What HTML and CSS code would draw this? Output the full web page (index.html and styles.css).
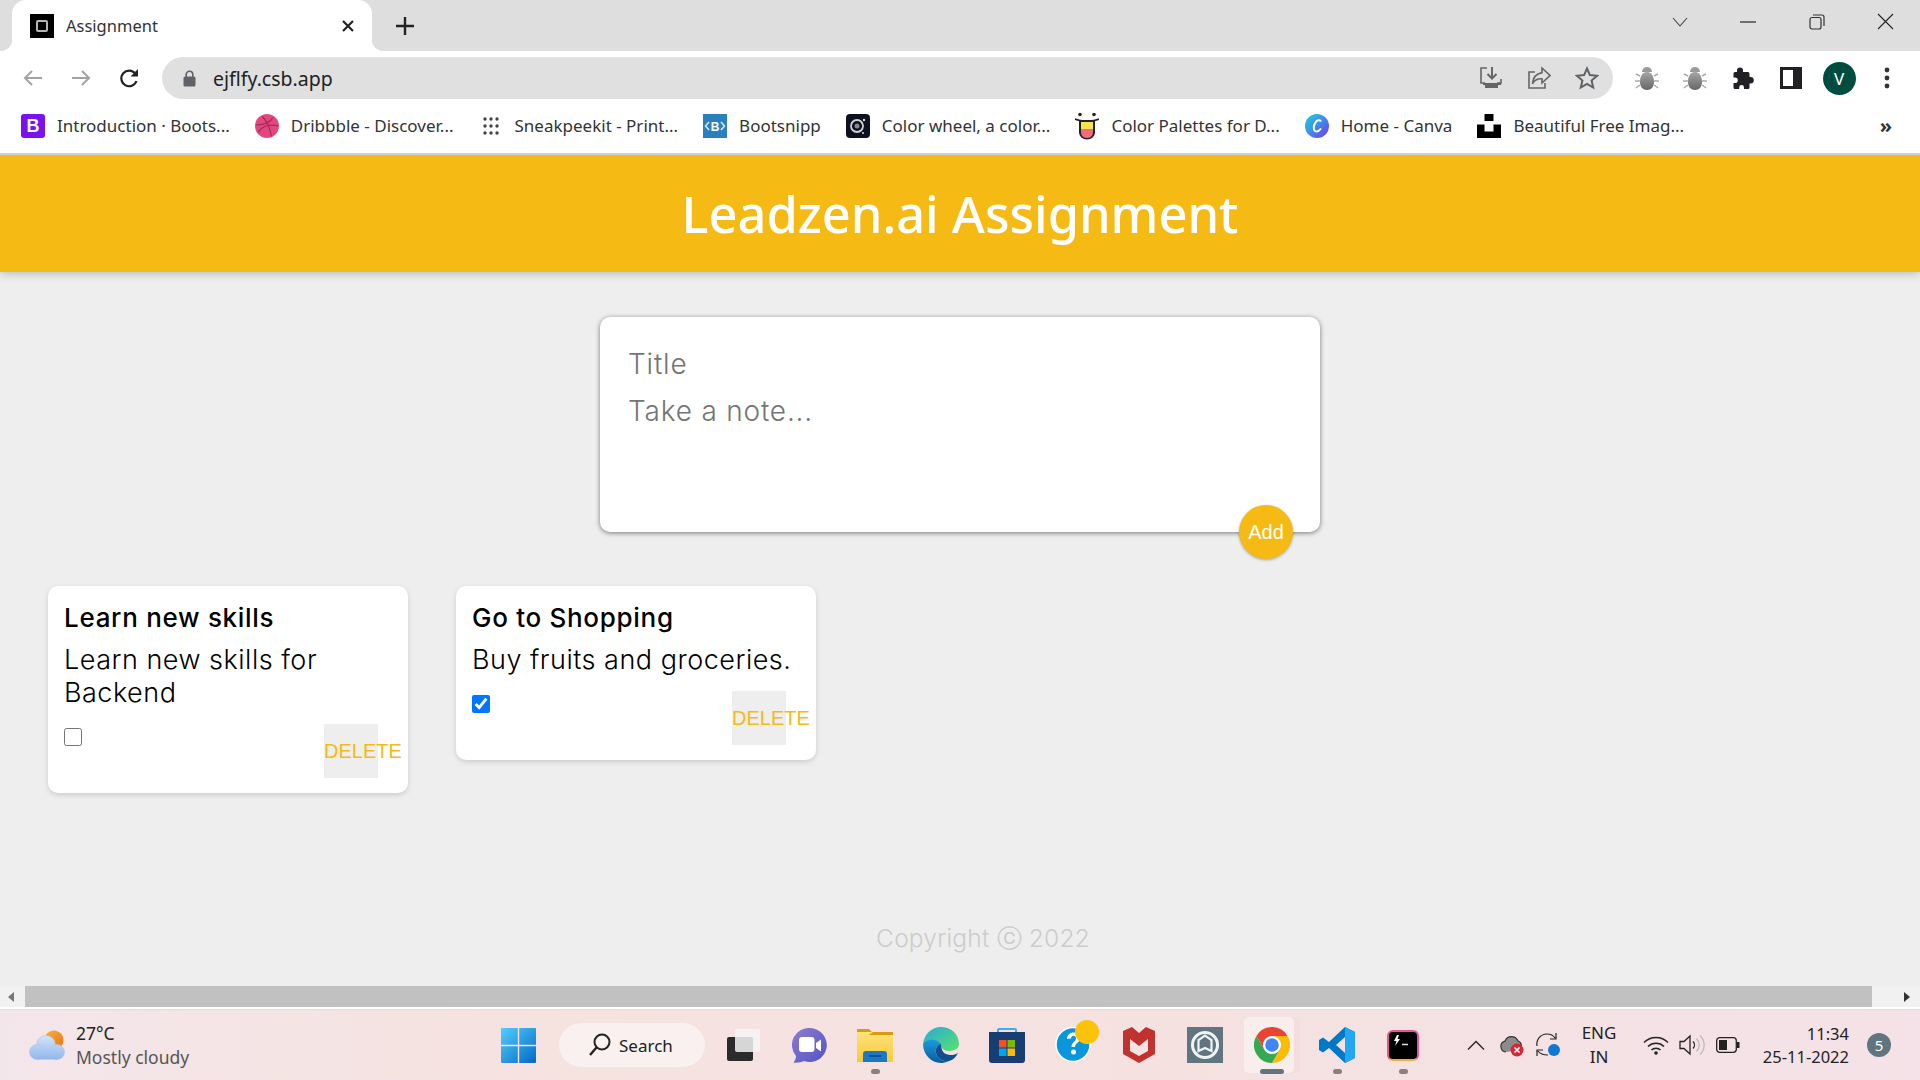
FILE: index.html
```html
<!DOCTYPE html>
<html>
<head>
	<title>Assignment</title>
	<link rel="stylesheet" href="styles.css">
</head>
<body>
<div class="window">

	<div class="tabstrip">
		<div class="tab">
			<span class="favicon"><span class="favicon-box"></span></span>
			<span class="tab-title">Assignment</span>
			<svg class="tab-close" width="14" height="14" viewBox="0 0 14 14"><path d="M2 2l10 10M12 2L2 12" stroke="#222" stroke-width="2.2"/></svg>
		</div>
		<svg class="new-tab" width="20" height="20" viewBox="0 0 20 20"><path d="M10 1v18M1 10h18" stroke="#222" stroke-width="2.4"/></svg>
		<div class="win-controls">
			<span class="win-btn"><svg width="18" height="12" viewBox="0 0 18 12"><path d="M2 2l7 8 7-8" fill="none" stroke="#444" stroke-width="1.1"/></svg></span>
			<span class="win-btn"><svg width="16" height="4" viewBox="0 0 16 4"><path d="M0 2h16" stroke="#222" stroke-width="1.2"/></svg></span>
			<span class="win-btn"><svg width="16" height="16" viewBox="0 0 16 16"><rect x="1" y="3.5" width="11" height="11.5" rx="2" fill="none" stroke="#333" stroke-width="1.2"/><path d="M4 1h9a2 2 0 0 1 2 2v9" fill="none" stroke="#333" stroke-width="1.2"/></svg></span>
			<span class="win-btn"><svg width="17" height="17" viewBox="0 0 17 17"><path d="M1 1l15 15M16 1L1 16" stroke="#222" stroke-width="1.1"/></svg></span>
		</div>
	</div>

	<div class="toolbar">
		<span class="tool-btn"><svg width="20" height="18" viewBox="0 0 20 18"><path d="M19 9H2M9 2L2 9l7 7" fill="none" stroke="#a3a3a3" stroke-width="2"/></svg></span>
		<span class="tool-btn"><svg width="20" height="18" viewBox="0 0 20 18"><path d="M1 9h17M11 2l7 7-7 7" fill="none" stroke="#a3a3a3" stroke-width="2"/></svg></span>
		<span class="tool-btn"><svg width="21" height="21" viewBox="0 0 21 21"><path d="M17.5 13a7.8 7.8 0 1 1-1.2-7.4" fill="none" stroke="#222" stroke-width="2.2"/><path d="M19 1v7.5h-7.5z" fill="#222"/></svg></span>
		<div class="omnibox">
			<svg class="lock" width="13" height="17" viewBox="0 0 13 17"><path d="M3.2 7V4.6a3.3 3.3 0 0 1 6.6 0V7" fill="none" stroke="#5f6368" stroke-width="1.6"/><rect x="0.5" y="6.5" width="12" height="10" rx="1.5" fill="#5f6368"/></svg>
			<span class="url">ejflfy.csb.app</span>
			<span class="omni-icons">
				<span class="tool-btn"><svg width="24" height="24" viewBox="0 0 24 24"><path d="M8 2H2v15h4M22 13v4h-4" fill="none" stroke="#666" stroke-width="1.6"/><path d="M13 1v11M8.500 8l4.500 4.500L17.500 8" fill="none" stroke="#666" stroke-width="2"/><path d="M4 17h18v2H4z" fill="#666"/><path d="M6 19h13v3H6z" fill="#666"/></svg></span>
				<span class="tool-btn"><svg width="24" height="24" viewBox="0 0 24 24"><path d="M8 6H2v16h16v-5" fill="none" stroke="#666" stroke-width="1.6"/><path d="M15 2l8 7.5-8 7.5v-4.2c-4.5-.3-7.5 1.2-9.5 5 .3-6 3.5-10 9.5-11.2z" fill="none" stroke="#666" stroke-width="1.6"/></svg></span>
				<span class="tool-btn"><svg width="24" height="24" viewBox="0 0 24 24"><path d="M12 2.5l2.9 6.6 7.1.7-5.4 4.7 1.6 7-6.2-3.7-6.2 3.7 1.6-7L2 9.8l7.1-.7z" fill="none" stroke="#5f6368" stroke-width="2"/></svg></span>
			</span>
		</div>
		<span class="tool-btn first-ext"><svg width="24" height="26" viewBox="0 0 24 26"><use href="#bug"/></svg></span>
		<span class="tool-btn"><svg width="24" height="26" viewBox="0 0 24 26"><use href="#bug"/></svg></span>
		<span class="tool-btn"><svg width="24" height="24" viewBox="0 0 24 24"><path d="M9 1.5a3 3 0 0 1 3 3V6h5a1.5 1.5 0 0 1 1.5 1.5V11h1a3.2 3.2 0 0 1 0 6.5h-1v4a1.5 1.5 0 0 1-1.5 1.500h-4v-1.500a2.400 2.400 0 0 0-4.800 0V23H4a1.500 1.500 0 0 1-1.500-1.500V17H4a2.800 2.800 0 0 0 0-5.600H2.500V7.500A1.500 1.500 0 0 1 4 6h2V4.500a3 3 0 0 1 3-3z" fill="#202124"/></svg></span>
		<span class="tool-btn"><svg width="22" height="22" viewBox="0 0 22 22"><rect x="0" y="0" width="22" height="22" fill="#202124"/><rect x="3" y="3" width="10" height="16" fill="#fff"/></svg></span>
		<span class="tool-btn"><span class="avatar">V</span></span>
		<span class="tool-btn"><svg width="6" height="22" viewBox="0 0 6 22"><circle cx="3" cy="3" r="2.400" fill="#333"/><circle cx="3" cy="11" r="2.400" fill="#333"/><circle cx="3" cy="19" r="2.400" fill="#333"/></svg></span>
	</div>

	<div class="bookmarks">
		<span class="bm"><svg width="24" height="24" viewBox="0 0 24 24"><rect width="24" height="24" rx="3" fill="#7a12ee"/><text x="12" y="18" text-anchor="middle" class="bm-letter">B</text></svg>Introduction · Boots...</span>
		<span class="bm"><svg width="24" height="24" viewBox="0 0 24 24"><circle cx="12" cy="12" r="12" fill="#e2487f"/><path d="M7.500 2.500c4 4.500 7.500 11.500 9 20M1 11c6.500 0 12.500-1.500 17-7M3 18.500c3-5.500 10-9 20-6.500" fill="none" stroke="#a82a5a" stroke-width="1.200"/></svg>Dribbble - Discover...</span>
		<span class="bm"><svg width="24" height="18" viewBox="-4 0 24 18"><g fill="#444"><circle cx="2" cy="2" r="1.700"/><circle cx="8" cy="2" r="1.700"/><circle cx="14" cy="2" r="1.700"/><circle cx="2" cy="9" r="1.700"/><circle cx="8" cy="9" r="1.700"/><circle cx="14" cy="9" r="1.700"/><circle cx="2" cy="16" r="1.700"/><circle cx="8" cy="16" r="1.700"/><circle cx="14" cy="16" r="1.700"/></g></svg>Sneakpeekit - Print...</span>
		<span class="bm"><svg width="24" height="24" viewBox="0 0 24 24"><rect width="24" height="24" fill="#2a7fbe"/><text x="12" y="17" text-anchor="middle" class="bm-snip">B</text><path d="M6 8l-3.500 4L6 16M18 8l3.500 4L18 16" fill="none" stroke="#d5e8f5" stroke-width="1.600"/></svg>Bootsnipp</span>
		<span class="bm"><svg width="24" height="24" viewBox="0 0 24 24"><rect width="24" height="24" rx="4" fill="#0d1021"/><circle cx="11" cy="12" r="6" fill="none" stroke="#cfd2d6" stroke-width="1.800"/><circle cx="11" cy="12" r="2.500" fill="#888"/><circle cx="18" cy="6" r="1.200" fill="#ddd"/><circle cx="17" cy="19" r="1" fill="#ddd"/></svg>Color wheel, a color...</span>
		<span class="bm"><svg width="24" height="28" viewBox="0 0 24 28"><circle cx="5" cy="2.500" r="1.800" fill="#222"/><circle cx="19" cy="2.500" r="1.800" fill="#222"/><path d="M0 7c3 1.500 5 2 12 2s9-.5 12-2" fill="none" stroke="#222" stroke-width="1.800"/><path d="M4 8.500h16v12a8 7 0 0 1-16 0z" fill="#222"/><path d="M6 10h12v7H6z" fill="#fce34e"/><path d="M6 17h12v3.500a6 5.500 0 0 1-12 0z" fill="#f46a7a"/></svg>Color Palettes for D...</span>
		<span class="bm"><svg width="24" height="24" viewBox="0 0 24 24"><defs><linearGradient id="canva" x1="0" y1="0" x2="1" y2="1"><stop offset="0" stop-color="#1fd2d8"/><stop offset="0.500" stop-color="#3f8ce8"/><stop offset="1" stop-color="#7b2ff0"/></linearGradient></defs><circle cx="12" cy="12" r="12" fill="url(#canva)"/><path d="M16 7.500c-1-2-4-1.500-5.500 1-2 3-2.500 7-.5 8.500 2 1.300 4.500-.5 6-2.500" fill="none" stroke="#fff" stroke-width="2"/></svg>Home - Canva</span>
		<span class="bm"><svg width="24" height="24" viewBox="0 0 24 24"><path d="M7.500 0h9v7h-9zM0 10.500h7.500v7h9v-7H24V24H0z" fill="#000"/></svg>Beautiful Free Imag...</span>
		<span class="bm-more">»</span>
	</div>

	<main class="page">
		<header class="site-header"><h1>Leadzen.ai Assignment</h1></header>

		<form class="create-note">
			<input class="note-title" type="text" placeholder="Title">
			<textarea class="note-body" placeholder="Take a note..."></textarea>
			<button class="add-btn" type="button">Add</button>
		</form>

		<div class="notes">
			<div class="note">
				<h2>Learn new skills</h2>
				<p>Learn new skills for Backend</p>
				<div class="note-actions">
					<input type="checkbox">
					<button class="delete-btn" type="button">DELETE</button>
				</div>
			</div>
			<div class="note">
				<h2>Go to Shopping</h2>
				<p>Buy fruits and groceries.</p>
				<div class="note-actions">
					<input type="checkbox" checked>
					<button class="delete-btn" type="button">DELETE</button>
				</div>
			</div>
		</div>

		<footer class="site-footer">Copyright ⓒ 2022</footer>
	</main>

	<div class="hscroll">
		<span class="arrow-left"></span>
		<span class="hscroll-thumb"></span>
		<span class="arrow-right"></span>
	</div>

	<div class="taskbar">
		<div class="tb-left">
			<svg width="37" height="31" viewBox="0 0 37 31"><defs><linearGradient id="cloud" gradientUnits="userSpaceOnUse" x1="0" y1="6" x2="0" y2="30"><stop offset="0" stop-color="#d3e3fa"/><stop offset="1" stop-color="#90b6ea"/></linearGradient><linearGradient id="sun" x1="0" y1="0" x2="1" y2="1"><stop offset="0" stop-color="#fbb13c"/><stop offset="1" stop-color="#e9720f"/></linearGradient></defs><circle cx="25" cy="10" r="9.500" fill="url(#sun)"/><g fill="url(#cloud)" stroke="#a6c4ee" stroke-width="0.600"><circle cx="17" cy="15" r="9.500"/><circle cx="8" cy="22" r="7.500"/><circle cx="28" cy="22" r="7.500"/><rect x="8" y="18" width="20" height="11.500" stroke="none"/></g></svg>
			<div class="weather">
				<div class="temp">27°C</div>
				<div class="sky">Mostly cloudy</div>
			</div>
		</div>
		<span class="tb-item"><svg width="35" height="35" viewBox="0 0 35 35"><defs><linearGradient id="win" x1="0" y1="0" x2="1" y2="1"><stop offset="0" stop-color="#52cffc"/><stop offset="1" stop-color="#0269c8"/></linearGradient></defs><path d="M0 1a1 1 0 0 1 1-1h15.800v16.800H0zM18.200 0H34a1 1 0 0 1 1 1v15.800H18.200zM0 18.200h16.800V35H1a1 1 0 0 1-1-1zM18.200 18.200H35V34a1 1 0 0 1-1 1H18.200z" fill="url(#win)"/></svg></span>
		<div class="tb-search">
			<svg width="24" height="26" viewBox="0 0 24 26"><circle cx="14" cy="10" r="7.500" fill="none" stroke="#222" stroke-width="2"/><path d="M8.500 15.500L2 23" stroke="#222" stroke-width="2.400"/></svg>
			<span>Search</span>
		</div>
		<span class="tb-item tb-taskview"><svg width="34" height="34" viewBox="0 0 34 34"><rect x="1" y="9" width="26" height="24" rx="2" fill="#2b2b2b"/><rect x="9" y="1" width="25" height="23" rx="2" fill="#f5f5f5" opacity="0.85"/></svg></span>
		<div class="tb-apps">
			<span class="tb-item"><svg width="35" height="35" viewBox="0 0 35 35"><defs><linearGradient id="chat" x1="0" y1="0" x2="1" y2="1"><stop offset="0" stop-color="#8f7bcf"/><stop offset="1" stop-color="#4f55c5"/></linearGradient></defs><path d="M18 0a17 17 0 1 1-6 33c-3 1.500-7 2-10.500 1.500 1.500-2 2.500-4 2.500-6.500A17 17 0 0 1 18 0z" fill="url(#chat)"/><rect x="7" y="9" width="15.500" height="15" rx="3" fill="#fff"/><path d="M24 15l5-3.500v12L24 20z" fill="#fff"/></svg></span>
			<span class="tb-item running"><svg width="36" height="33" viewBox="0 0 36 33"><defs><linearGradient id="folder" x1="0" y1="0" x2="0" y2="1"><stop offset="0" stop-color="#fde27a"/><stop offset="1" stop-color="#fbc938"/></linearGradient></defs><path d="M0 1a1 1 0 0 1 1-1h11l3 3h21v4H0z" fill="#d99c0c"/><path d="M0 3h16l-4 3h24v27H0z" fill="url(#folder)"/><path d="M6 33V25a3 3 0 0 1 3-3h18a3 3 0 0 1 3 3v8z" fill="#1a78c4"/><path d="M12 27h12" stroke="#0d4c86" stroke-width="1.600"/></svg></span>
			<span class="tb-item"><svg width="36" height="36" viewBox="0 0 36 36"><defs><linearGradient id="edge1" x1="0" y1="0" x2="1" y2="1"><stop offset="0" stop-color="#27a9d9"/><stop offset="1" stop-color="#5be26b"/></linearGradient><linearGradient id="edge2" x1="0" y1="0" x2="0" y2="1"><stop offset="0" stop-color="#1a9bdc"/><stop offset="1" stop-color="#0c5a9f"/></linearGradient></defs><path d="M0 17C1 7 9 0 18 0c10 0 18 7 18 17 0 5-5 7-10 7-3 0-6-1-7-3-5-7-14-9-19-4z" fill="url(#edge1)"/><path d="M0 17c4-6 14-5 18 0-4 1-6 5-5 9 1 5 6 9 13 8-3 1.500-6 2-8 2C8 36 0 27 0 17z" fill="url(#edge2)"/><path d="M18 17c-4 1-6 5-5 9 1 5 6 9 13 8 4-1 7-4 9-8-3 2-8 3-12 1-3-1-5-5-5-10z" fill="#0e4f8f"/></svg></span>
			<span class="tb-item"><svg width="36" height="35" viewBox="0 0 36 35"><path d="M9 6V2a1 1 0 0 1 1-1h16a1 1 0 0 1 1 1v4" fill="none" stroke="#3bb0e8" stroke-width="2"/><path d="M0 4h36v28a3 3 0 0 1-3 3H3a3 3 0 0 1-3-3z" fill="#173d72"/><rect x="10" y="12" width="7.500" height="7.500" fill="#f25022"/><rect x="18.500" y="12" width="7.500" height="7.500" fill="#7fba00"/><rect x="10" y="20.500" width="7.500" height="7.500" fill="#00a4ef"/><rect x="18.500" y="20.500" width="7.500" height="7.500" fill="#ffb900"/></svg></span>
			<span class="tb-item"><svg width="56" height="50" viewBox="0 0 56 50"><circle cx="28" cy="24.500" r="17" fill="#0b95da" stroke="#fff" stroke-width="1.500"/><path d="M22 19c0-4 3-6.500 6.500-6.500s6.500 2.500 6.500 6c0 4-5 4.500-5 8.500h-3.500c0-5 4.500-5.500 4.500-8.500 0-1.500-1-2.700-2.500-2.700s-2.500 1.200-2.500 2.700z" fill="#fff"/><circle cx="28.500" cy="32" r="2.500" fill="#fff"/><ellipse cx="42" cy="12" rx="12" ry="12" fill="#fcc30b"/></svg></span>
			<span class="tb-item"><svg width="32" height="36" viewBox="0 0 32 36"><path d="M0 4l9-4 7 6 7-6 9 4v23l-16 9-16-9z" fill="#c0322f"/><path d="M7 12l9 7 9-7v12l-9 5-9-5z" fill="#f5e2e1"/></svg></span>
			<span class="tb-item"><svg width="36" height="36" viewBox="0 0 36 36"><rect width="36" height="36" fill="#607580"/><circle cx="18" cy="18" r="12.500" fill="none" stroke="#f1f3f4" stroke-width="3"/><path d="M11.500 24V13L18 8.500l6.500 4.500v11l-6.500-3z" fill="none" stroke="#f1f3f4" stroke-width="2.200"/></svg></span>
			<span class="tb-item tb-active">
				<svg width="36" height="36" viewBox="0 0 36 36"><path d="M2.400 9A18 18 0 0 1 33.600 9H18a9 9 0 0 0-7.800 13.500z" fill="#ea4335"/><path d="M33.600 9A18 18 0 0 1 18 36l7.800-13.500A9 9 0 0 0 18 9z" fill="#fbbc05"/><path d="M18 36A18 18 0 0 1 2.400 9l7.800 13.500a9 9 0 0 0 15.600 0z" fill="#34a853"/><circle cx="18" cy="18" r="8.500" fill="#fff"/><circle cx="18" cy="18" r="6.800" fill="#4285f4"/></svg>
			</span>
			<span class="tb-item running"><svg width="36" height="36" viewBox="0 0 36 36"><path fill-rule="evenodd" d="M26 0l10 5v26l-10 5-16-15-6 4.500L0 23V13l4-2.500L10 15zM26 10l-9 8 9 8z" fill="#0078c8"/><path d="M26 0l10 5v26l-10 5z" fill="#22a7f2"/></svg></span>
			<span class="tb-item running"><span class="term"><svg width="16" height="14" viewBox="0 0 16 14"><path d="M4 0L1 6h2.500L2 11l5-7H4.500L6 0z" fill="#fff"/><path d="M9 9.500h6" stroke="#ddd" stroke-width="1.500"/></svg></span></span>
		</div>
		<div class="tray">
			<span class="tray-item"><svg width="18" height="10" viewBox="0 0 18 10"><path d="M1 9.500L9 1.500l8 8" fill="none" stroke="#222" stroke-width="1.300"/></svg></span>
			<span class="tray-item"><svg width="26" height="24" viewBox="0 0 26 24"><path d="M7 19a5.500 5.500 0 0 1-1-10.800A7 7 0 0 1 19 8a5 5 0 0 1 1 9" fill="#8c8c8c" stroke="#333" stroke-width="1.200"/><circle cx="18" cy="17" r="6.500" fill="#d92632"/><path d="M15.500 14.500l5 5M20.500 14.500l-5 5" stroke="#fff" stroke-width="1.600"/></svg></span>
			<span class="tray-item"><svg width="26" height="26" viewBox="0 0 26 26"><path d="M2 14C1 7 6 2 12 2c3 0 6 1 8 4M21 1v6h-6" fill="none" stroke="#222" stroke-width="1.200"/><path d="M13 23c-4 0-8-1-10-4M2 24v-6h6" fill="none" stroke="#222" stroke-width="1.200"/><circle cx="19" cy="18" r="6" fill="#0f78d4"/></svg></span>
			<div class="tray-lang">ENG<br>IN</div>
			<span class="tray-item tray-wifi"><svg width="26" height="20" viewBox="0 0 26 20"><path d="M1 7.500a17 17 0 0 1 24 0M5 11.500a11.500 11.500 0 0 1 16 0M8.500 15a6.500 6.500 0 0 1 9 0" fill="none" stroke="#222" stroke-width="1.500"/><circle cx="13" cy="18" r="1.800" fill="#222"/></svg></span>
			<span class="tray-item"><svg width="26" height="22" viewBox="0 0 26 22"><path d="M1 7.500h4l6-5.500v18l-6-5.500H1z" fill="none" stroke="#222" stroke-width="1.300"/><path d="M14 7.500a5 5 0 0 1 0 7" fill="none" stroke="#222" stroke-width="1.300"/><path d="M17.500 4.500a9 9 0 0 1 0 13M21 1.500a13 13 0 0 1 0 19" fill="none" stroke="#bbb" stroke-width="1.300"/></svg></span>
			<span class="tray-item"><svg width="24" height="16" viewBox="0 0 24 16"><rect x="0.700" y="0.700" width="19.600" height="14.600" rx="3" fill="none" stroke="#222" stroke-width="1.300"/><rect x="3" y="3" width="8" height="10" fill="#222"/><rect x="21" y="5" width="2.500" height="6" fill="#222"/></svg></span>
			<div class="clock">11:34<br>25-11-2022</div>
			<span class="notif">5</span>
		</div>
	</div>

</div>

<svg class="defs" width="0" height="0">
	<defs>
		<linearGradient id="bug-fill" x1="0" y1="0" x2="0" y2="1"><stop offset="0" stop-color="#a6a6a6"/><stop offset="1" stop-color="#666"/></linearGradient>
		<g id="bug">
			<path d="M7 7a5 5 0 0 1 10 0z" fill="#9a9a9a"/>
			<path d="M12 7c5 0 7 5 7 10s-3 8-7 8-7-3-7-8 2-10 7-10z" fill="url(#bug-fill)"/>
			<path d="M5 11L1 9M5 16H0M5 20l-4 3M19 11l4-2M19 16h5M19 20l4 3" stroke="#aaa" stroke-width="1.400"/>
		</g>
	</defs>
</svg>
</body>
</html>
```

FILE: styles.css
```css
* {
	box-sizing: border-box;
}
html, body {
	margin: 0;
	padding: 0;
	height: 100%;
	overflow: hidden;
}
body {
	font-family: 'Noto Sans', sans-serif;
	color: #222;
	background-color: #fff;
}
.window {
	display: flex;
	flex-direction: column;
	height: 1080px;
}
.defs {
	display: block;
	height: 0;
}

/* tab strip */
.tabstrip {
	display: flex;
	align-items: center;
	flex-shrink: 0;
	height: 51px;
	padding-left: 12px;
	background-color: #dedede;
}
.tab {
	position: relative;
	display: flex;
	align-items: center;
	width: 360px;
	height: 51px;
	padding: 0 17px 0 18px;
	background-color: #fff;
	border-radius: 14px 14px 0 0;
}
.tab::before, .tab::after {
	content: "";
	position: absolute;
	bottom: 0;
	width: 12px;
	height: 12px;
}
.tab::before {
	left: -12px;
	background: radial-gradient(circle at 0 0, #dedede 12px, #fff 12.500px);
}
.tab::after {
	right: -12px;
	background: radial-gradient(circle at 100% 0, #dedede 12px, #fff 12.500px);
}
.favicon {
	display: flex;
	align-items: center;
	justify-content: center;
	width: 24px;
	height: 24px;
	background-color: #000;
}
.favicon-box {
	width: 12px;
	height: 12px;
	border: 2px solid #b5b5b5;
	border-radius: 2px;
}
.tab-title {
	margin-left: 12px;
	font-size: 16.500px;
	color: #333;
}
.tab-close {
	margin-left: auto;
}
.new-tab {
	margin-left: 23px;
}
.win-controls {
	display: flex;
	margin-left: auto;
	margin-top: -8px;
}
.win-btn {
	display: flex;
	align-items: center;
	justify-content: center;
	width: 68.700px;
	height: 36px;
}

/* toolbar */
.toolbar {
	display: flex;
	align-items: center;
	flex-shrink: 0;
	height: 54px;
	padding-left: 9px;
	background-color: #fff;
}
.tool-btn {
	display: flex;
	align-items: center;
	justify-content: center;
	width: 48px;
	height: 42px;
	flex-shrink: 0;
}
.omnibox {
	display: flex;
	align-items: center;
	width: 1451px;
	height: 42px;
	margin-left: 9px;
	padding-left: 21px;
	background-color: #e0e0e0;
	border-radius: 21px;
}
.lock {
	flex-shrink: 0;
}
.url {
	margin-left: 17px;
	font-size: 19.500px;
	color: #222;
}
.omni-icons {
	display: flex;
	margin-left: auto;
	margin-right: 2px;
}
.first-ext {
	margin-left: 10px;
}
.avatar {
	display: flex;
	align-items: center;
	justify-content: center;
	width: 33px;
	height: 33px;
	color: #fff;
	font-size: 17px;
	background-color: #004d40;
	border-radius: 50%;
}

/* bookmarks bar */
.bookmarks {
	display: flex;
	align-items: center;
	flex-shrink: 0;
	gap: 25px;
	height: 50px;
	padding: 0 0 7px 21px;
	background-color: #fff;
	border-bottom: 2px solid #d0d0d0;
	font-size: 17px;
	color: #333;
}
.bm {
	display: flex;
	align-items: center;
	gap: 12px;
	white-space: nowrap;
}
.bm-letter {
	font-family: 'Liberation Sans', sans-serif;
	font-size: 18px;
	font-weight: bold;
	fill: #fff;
}
.bm-snip {
	font-family: 'Liberation Sans', sans-serif;
	font-size: 12px;
	font-weight: bold;
	fill: #fff;
}
.bm-more {
	margin-left: auto;
	margin-right: 28px;
	font-size: 20px;
	font-weight: bold;
}

/* page */
.page {
	display: flex;
	flex-direction: column;
	flex: 1;
	min-height: 0;
	background-color: #eee;
	font-family: 'Inter', sans-serif;
	overflow: hidden;
}
.site-header {
	display: flex;
	align-items: center;
	justify-content: center;
	flex-shrink: 0;
	height: 117px;
	background-color: #f5ba13;
	box-shadow: 0 0 10px rgba(0, 0, 0, 0.3);
}
.site-header h1 {
	margin: 0;
	font-family: 'Noto Sans', sans-serif;
	font-size: 50.500px;
	font-weight: 500;
	color: #fff;
}
.create-note {
	position: relative;
	display: flex;
	flex-direction: column;
	flex-shrink: 0;
	width: 720px;
	height: 215px;
	margin: 45px auto 54px;
	padding: 24px 28px;
	background-color: #fff;
	border-radius: 10px;
	box-shadow: 0 1px 5px rgba(0, 0, 0, 0.5);
}
.note-title, .note-body {
	width: 100%;
	padding: 0;
	border: none;
	outline: none;
	resize: none;
	background: none;
	font-family: 'Inter', sans-serif;
	font-size: 28px;
	font-weight: 300;
	letter-spacing: 0.8px;
	line-height: 47px;
}
.note-title::placeholder, .note-body::placeholder {
	color: #757575;
}
.note-body {
	height: 100px;
}
.add-btn {
	position: absolute;
	right: 27px;
	bottom: -27px;
	width: 54px;
	height: 54px;
	padding: 0;
	border: none;
	border-radius: 50%;
	background-color: #f5ba13;
	color: #fff;
	font-family: 'Liberation Sans', sans-serif;
	font-size: 20px;
	box-shadow: 0 1px 3px rgba(0, 0, 0, 0.3);
}
.notes {
	display: flex;
	align-items: flex-start;
	flex-shrink: 0;
	gap: 48px;
	padding-left: 48px;
}
.note {
	width: 360px;
	padding: 15px 16px 15px;
	background-color: #fff;
	border-radius: 10px;
	box-shadow: 0 2px 5px #ccc;
}
.note h2 {
	margin: 0 0 8px;
	font-size: 26px;
	font-weight: 500;
	letter-spacing: 0.7px;
	line-height: 34px;
	color: #000;
}
.note p {
	margin: 0 0 15px;
	font-size: 27px;
	font-weight: 300;
	letter-spacing: 0.5px;
	line-height: 33px;
	color: #000;
}
.note-actions {
	display: flex;
	align-items: flex-start;
	justify-content: space-between;
	padding-right: 14px;
}
.note-actions input {
	width: 18px;
	height: 18px;
	margin: 4px 0 0;
}
.delete-btn {
	display: flex;
	align-items: center;
	width: 54px;
	height: 54px;
	padding: 0;
	border: none;
	background-color: #eee;
	color: #f5ba13;
	font-family: 'Liberation Sans', sans-serif;
	font-size: 20px;
	white-space: nowrap;
}
.site-footer {
	margin-top: auto;
	padding: 0 0 31px 46px;
	text-align: center;
	font-size: 24.500px;
	font-weight: 300;
	letter-spacing: 0.2px;
	color: #ccc;
}

/* scrollbar */
.hscroll {
	display: flex;
	align-items: center;
	flex-shrink: 0;
	height: 21px;
	margin-bottom: 2px;
	background-color: #f1f1f1;
}
.arrow-left {
	width: 0;
	height: 0;
	margin-left: 8px;
	border: 5px solid transparent;
	border-left: none;
	border-right: 6px solid #777;
}
.hscroll-thumb {
	width: 1847px;
	height: 21px;
	margin-left: 11px;
	background-color: #c1c1c1;
}
.arrow-right {
	width: 0;
	height: 0;
	margin-left: 32px;
	border: 5px solid transparent;
	border-right: none;
	border-left: 6px solid #333;
}

/* taskbar */
.taskbar {
	display: flex;
	align-items: center;
	flex-shrink: 0;
	height: 71px;
	background: linear-gradient(90deg, #f3e6ea 0%, #f6e2df 30%, #f5e1e0 60%, #f4e2e8 100%);
	border-top: 1px solid #e8d8d8;
}
.tb-left {
	display: flex;
	align-items: center;
	width: 485px;
	padding-left: 29px;
}
.weather {
	margin-left: 10px;
	font-size: 17.500px;
	line-height: 24px;
}
.sky {
	color: #555;
}
.tb-item {
	position: relative;
	display: flex;
	align-items: center;
	justify-content: center;
	width: 66px;
	height: 56px;
	flex-shrink: 0;
}
.running::after, .tb-active::after {
	content: "";
	position: absolute;
	left: 29px;
	bottom: -1px;
	width: 9px;
	height: 5px;
	border-radius: 3px;
	background-color: #8a7f7f;
}
.tb-active {
	justify-content: flex-start;
	width: 50px;
	margin: 0 10px 0 6px;
	padding-left: 10px;
	background-color: #f8eeec;
	border-radius: 5px;
	box-shadow: 6px 0 0 #f3dedd;
}
.tb-active::after {
	left: 16px;
	width: 24px;
	background-color: #607580;
}
.tb-search {
	display: flex;
	align-items: center;
	gap: 7px;
	width: 146px;
	height: 44px;
	margin-left: 8px;
	padding-left: 29px;
	background-color: #f9f1ef;
	border-radius: 22px;
	font-size: 17px;
}
.tb-taskview {
	margin-left: 5px;
}
.tb-apps {
	display: flex;
	align-items: center;
}
.term {
	display: flex;
	align-items: center;
	justify-content: flex-start;
	width: 32px;
	height: 31px;
	padding: 0 0 6px 4px;
	background-color: #000;
	border: 2px solid #ef4f9b;
	border-bottom-color: #f5a94a;
	border-radius: 6px;
}
.tray {
	display: flex;
	align-items: center;
	margin-left: auto;
	padding-right: 29px;
}
.tray-item {
	display: flex;
	align-items: center;
	justify-content: center;
	width: 36px;
}
.tray-lang {
	width: 66px;
	text-align: center;
	font-size: 17px;
	line-height: 24px;
}
.tray-wifi {
	margin-left: 6px;
}
.clock {
	width: 103px;
	text-align: right;
	font-size: 16.500px;
	line-height: 23px;
}
.notif {
	display: flex;
	align-items: center;
	justify-content: center;
	width: 24px;
	height: 24px;
	margin-left: 18px;
	color: #fff;
	font-size: 15px;
	background-color: #607580;
	border-radius: 50%;
}
```
